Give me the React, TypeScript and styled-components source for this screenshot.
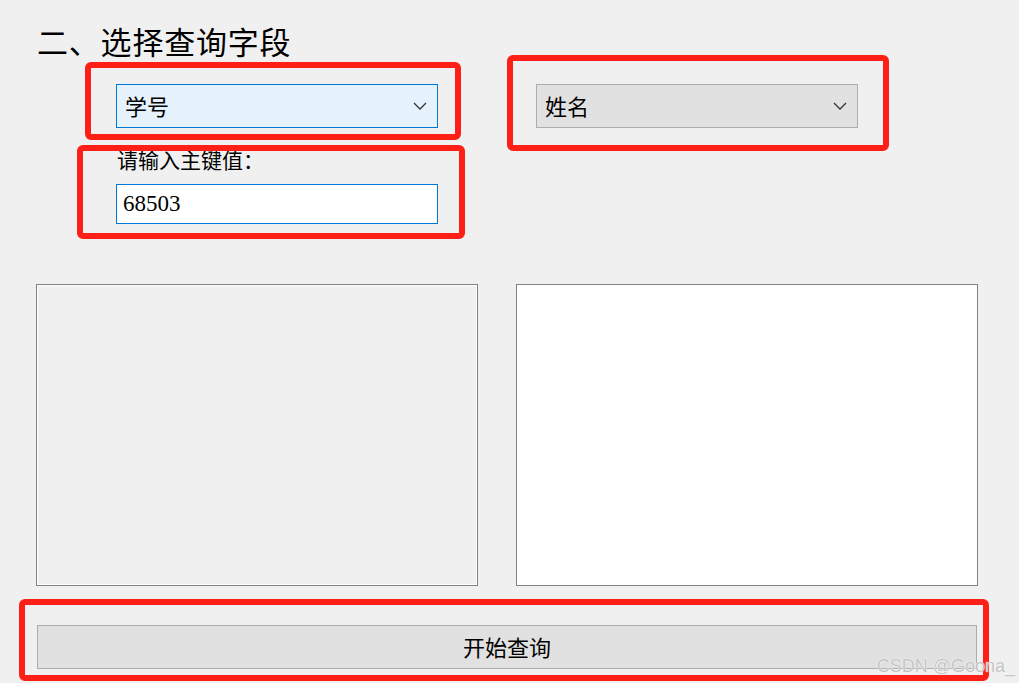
import styled, { createGlobalStyle } from 'styled-components'

const GlobalStyle = createGlobalStyle`
  html, body {
    margin: 0;
    padding: 0;
    background: #f0f0f0;
  }
  body {
    font-family: "Noto Sans CJK SC", "Noto Sans", sans-serif;
    color: #000;
  }
`

const Form = styled.div`
  position: relative;
  width: 1019px;
  height: 683px;
  overflow: hidden;
  background: #f0f0f0;
`

const Title = styled.h2`
  margin: 0;
  padding: 22px 0 0 37px;
  height: 40px;
  font-size: 31px;
  line-height: 38px;
  font-weight: 400;
  letter-spacing: 0.8px;
`

const FieldRow = styled.div`
  display: flex;
  align-items: flex-start;
  gap: 98px;
  padding: 22px 0 0 116px;
`

const Column = styled.div`
  display: flex;
  flex-direction: column;
  width: 322px;
`

const Anchor = styled.div`
  position: relative;
`

/* red annotation frame drawn on top of the form */
const Highlight = styled.div<{ $t: number; $r: number; $b: number; $l: number }>`
  position: absolute;
  top: ${p => p.$t}px;
  right: ${p => p.$r}px;
  bottom: ${p => p.$b}px;
  left: ${p => p.$l}px;
  border: 6px solid #fe2016;
  border-radius: 6px;
  pointer-events: none;
`

const Combo = styled.div<{ $focused?: boolean }>`
  box-sizing: border-box;
  display: flex;
  align-items: center;
  justify-content: space-between;
  width: 322px;
  height: 44px;
  padding: 0 10px 3px 8px;
  background: ${p => (p.$focused ? '#e5f1fb' : '#e1e1e1')};
  border: 1px solid ${p => (p.$focused ? '#0078d7' : '#adadad')};
  font-size: 22px;
  line-height: 1;

  svg {
    flex: none;
    margin-top: 3px;
  }
`

const InputGroup = styled.div`
  position: relative;
  margin-top: 18px;
`

const Label = styled.div`
  height: 38px;
  padding-left: 1px;
  font-size: 21px;
  line-height: 26px;
`

const TextBox = styled.div`
  box-sizing: border-box;
  display: flex;
  align-items: center;
  height: 40px;
  padding: 0 6px;
  background: #fff;
  border: 1px solid #0078d7;
  font-family: "Liberation Serif", "Noto Sans CJK SC", serif;
  font-size: 23px;
`

const Panels = styled.div`
  display: flex;
  gap: 38px;
  padding: 60px 0 0 36px;
`

const ListPanel = styled.div<{ $filled?: boolean }>`
  box-sizing: border-box;
  width: ${p => (p.$filled ? 462 : 442)}px;
  height: 302px;
  border: 1px solid #828282;
  background: ${p => (p.$filled ? '#fff' : '#f0f0f0')};
  box-shadow: inset 0 0 0 1px #fff;
`

const ButtonWrap = styled.div`
  position: relative;
  margin: 39px 0 0 37px;
  width: 940px;
`

const Button = styled.button`
  box-sizing: border-box;
  display: block;
  width: 940px;
  height: 44px;
  margin: 0;
  padding: 0 0 3px;
  background: #e1e1e1;
  border: 1px solid #adadad;
  font-family: "Noto Sans CJK SC", sans-serif;
  font-size: 22px;
  color: #000;
`

const Watermark = styled.div`
  position: absolute;
  right: 4px;
  bottom: 6px;
  font-family: "Liberation Sans", Arial, sans-serif;
  font-size: 18px;
  color: #c4c4c4;
  text-shadow: 0 0 1px #fff, 0 0 1px #fff;
`

const Chevron = () => (
  <svg width="14" height="8" viewBox="0 0 14 8">
    <path d="M1 1 L7 7 L13 1" fill="none" stroke="#333" strokeWidth="1.3" />
  </svg>
)

export default function App() {
  return (
    <>
      <GlobalStyle />
      <Form>
        <Title>二、选择查询字段</Title>
        <FieldRow>
          <Column>
            <Anchor>
              <Combo $focused>
                <span>学号</span>
                <Chevron />
              </Combo>
              <Highlight $t={-22} $r={-23} $b={-12} $l={-31} />
            </Anchor>
            <InputGroup>
              <Label>请输入主键值：</Label>
              <TextBox>68503</TextBox>
              <Highlight $t={-1} $r={-27} $b={-15} $l={-39} />
            </InputGroup>
          </Column>
          <Anchor>
            <Combo>
              <span>姓名</span>
              <Chevron />
            </Combo>
            <Highlight $t={-29} $r={-31} $b={-23} $l={-29} />
          </Anchor>
        </FieldRow>
        <Panels>
          <ListPanel />
          <ListPanel $filled />
        </Panels>
        <ButtonWrap>
          <Button>开始查询</Button>
          <Highlight $t={-26} $r={-12} $b={-12} $l={-18} />
        </ButtonWrap>
        <Watermark>CSDN @Goona_</Watermark>
      </Form>
    </>
  )
}
